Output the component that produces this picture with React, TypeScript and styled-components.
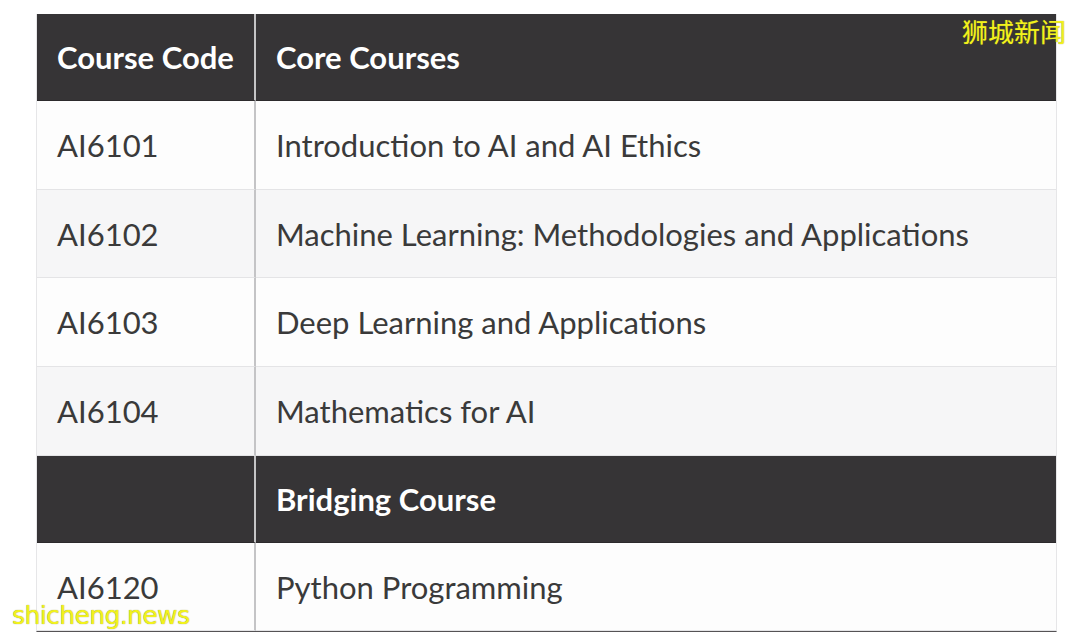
import styled, { createGlobalStyle } from "styled-components";
import { Fragment } from "react";

const Global = createGlobalStyle`
  html, body {
    margin: 0;
    padding: 0;
    background: #ffffff;
  }
  body {
    font-family: Lato, "Noto Sans", sans-serif;
  }
`;

const Page = styled.div`
  width: 1080px;
  height: 635px;
  overflow: hidden;
  position: relative;
  background: #ffffff;
  padding: 14px 0 0 36px;
  box-sizing: border-box;
`;

const Table = styled.div`
  width: 1019px;
  display: grid;
  grid-template-columns: 219px 1fr;
  grid-template-rows: 87px 89px 88px 89px 89px 87px 88px;
  border-right: 1px solid #e6e6e8;
  border-left: 1px solid #e6e6e8;
  border-bottom: 1px solid #555355;
`;

const Cell = styled.div<{ $tone: "dark" | "white" | "gray"; $first?: boolean }>`
  display: flex;
  align-items: center;
  padding-left: 20px;
  box-sizing: border-box;
  font-size: 31px;
  color: ${(p) => (p.$tone === "dark" ? "#ffffff" : "#3a3a3a")};
  font-weight: ${(p) => (p.$tone === "dark" ? 700 : 400)};
  background: ${(p) =>
    p.$tone === "dark" ? "#363436" : p.$tone === "gray" ? "#f6f6f7" : "#fdfdfd"};
  border-bottom: 1px solid
    ${(p) => (p.$tone === "dark" ? "#2c2a2c" : "#e4e4e6")};
  border-right: ${(p) => (p.$first ? "2px solid #c4c4c6" : "none")};
`;

const Mark = styled.div<{ $where: "top" | "bottom" }>`
  position: absolute;
  color: #f2f21c;
  line-height: 1;
  text-shadow: 0 0 1px #8a8a20;
  ${(p) =>
    p.$where === "top"
      ? `top: 18px; right: 14px; font-size: 26px; font-family: "Noto Sans CJK SC", sans-serif;`
      : `bottom: 7px; left: 12px; font-size: 25px; font-family: "DejaVu Sans", sans-serif; letter-spacing: -0.6px;`}
`;

type Row = { code: string; name: string; tone: "dark" | "white" | "gray" };

const rows: Row[] = [
  { code: "Course Code", name: "Core Courses", tone: "dark" },
  { code: "AI6101", name: "Introduction to AI and AI Ethics", tone: "white" },
  { code: "AI6102", name: "Machine Learning: Methodologies and Applications", tone: "gray" },
  { code: "AI6103", name: "Deep Learning and Applications", tone: "white" },
  { code: "AI6104", name: "Mathematics for AI", tone: "gray" },
  { code: "", name: "Bridging Course", tone: "dark" },
  { code: "AI6120", name: "Python Programming", tone: "white" },
];

export default function App() {
  return (
    <Page>
      <Global />
      <Table>
        {rows.map((r, i) => (
          <Fragment key={i}>
            <Cell $tone={r.tone} $first>
              {r.code}
            </Cell>
            <Cell $tone={r.tone}>{r.name}</Cell>
          </Fragment>
        ))}
      </Table>
      <Mark $where="top">狮城新闻</Mark>
      <Mark $where="bottom">shicheng.news</Mark>
    </Page>
  );
}
